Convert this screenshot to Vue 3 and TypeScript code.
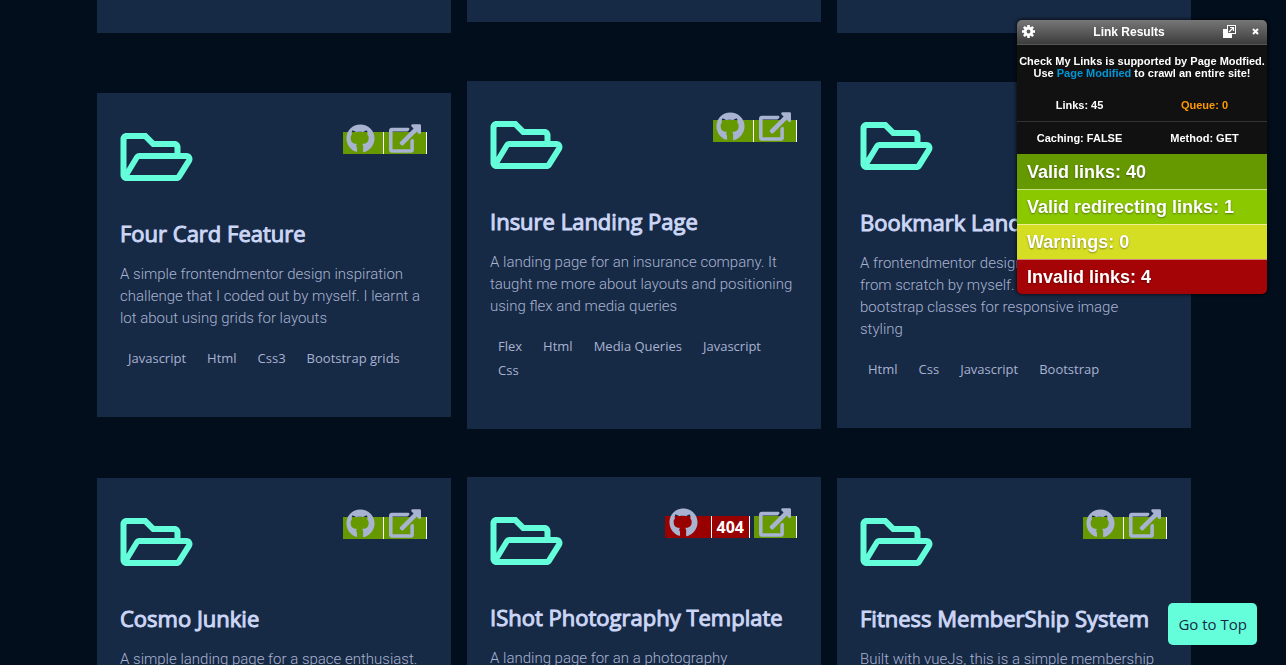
<script setup lang="ts">
interface LinkBadge {
  kind: 'github' | 'external'
  status: 'valid' | 'invalid'
  code?: string
}

interface Project {
  title: string
  text: string
  tags: string[]
  links: LinkBadge[]
  size?: string
}

const github: LinkBadge = { kind: 'github', status: 'valid' }
const external: LinkBadge = { kind: 'external', status: 'valid' }

const projects: Project[] = [
  {
    title: 'Four Card Feature',
    text: 'A simple frontendmentor design inspiration challenge that I coded out by myself. I learnt a lot about using grids for layouts',
    tags: ['Javascript', 'Html', 'Css3', 'Bootstrap grids'],
    links: [github, external],
  },
  {
    title: 'Insure Landing Page',
    text: 'A landing page for an insurance company. It taught me more about layouts and positioning using flex and media queries',
    tags: ['Flex', 'Html', 'Media Queries', 'Javascript', 'Css'],
    links: [github, external],
  },
  {
    title: 'Bookmark Landing',
    text: 'A frontendmentor design\nfrom scratch by myself.\nbootstrap classes for responsive image\nstyling',
    tags: ['Html', 'Css', 'Javascript', 'Bootstrap'],
    links: [github, external],
  },
  {
    title: 'Cosmo Junkie',
    text: 'A simple landing page for a space enthusiast.',
    tags: [],
    links: [github, external],
    size: 'medium',
  },
  {
    title: 'IShot Photography Template',
    text: 'A landing page for an a photography',
    tags: [],
    links: [{ kind: 'github', status: 'invalid', code: '404' }, external],
    size: 'tall',
  },
  {
    title: 'Fitness MemberShip System',
    text: 'Built with vueJs, this is a simple membership',
    tags: [],
    links: [github, external],
    size: 'medium',
  },
]

const results = [
  { name: 'valid', label: 'Valid links: 40' },
  { name: 'redirect', label: 'Valid redirecting links: 1' },
  { name: 'warning', label: 'Warnings: 0' },
  { name: 'invalid', label: 'Invalid links: 4' },
]

const teeth = [0, 45, 90, 135, 180, 225, 270, 315]

function toTop(): void {
  window.scrollTo({ top: 0, behavior: 'smooth' })
}
</script>

<template>
  <div class="page">
    <main class="projects">
      <div class="tail"></div>
      <div class="tail tail-short"></div>
      <div class="tail"></div>
      <article v-for="p in projects" :key="p.title" class="card" :class="p.size">
        <header class="card-head">
          <svg class="folder" viewBox="0 0 576 512" aria-hidden="true">
            <path d="M527.9 224H480v-48c0-26.5-21.5-48-48-48H272l-64-64H48C21.5 64 0 85.5 0 112v288c0 26.5 21.5 48 48 48h400c16.5 0 31.9-8.5 40.7-22.6l79.9-128c20-31.9-3-73.4-40.7-73.4zM48 118c0-3.3 2.7-6 6-6h134.1l64 64H426c3.3 0 6 2.7 6 6v42H152c-16.8 0-32.4 8.8-41.1 23.2L48 351.4zm400 282H72l77.2-128H528z" />
          </svg>
          <div class="links">
            <a
              v-for="l in p.links"
              :key="l.kind"
              href="#"
              class="badge"
              :class="[l.kind, l.status]"
              :aria-label="l.kind === 'github' ? 'Source code' : 'Live site'"
            >
              <span class="badge-icon">
                <svg v-if="l.kind === 'github'" viewBox="0 0 496 512" aria-hidden="true">
                  <path d="M244.8 8C106.1 8 0 113.3 0 252c0 110.9 69.8 205.8 169.5 239.2 12.8 2.3 17.3-5.6 17.3-12.1 0-6.2-.3-40.4-.3-61.4 0 0-10-15-14.700-29.800 0-12 6-26 14.800-33.200-55.900-6.200-112.300-14.300-112.300-110.500 0-27.500 7.600-41.300 23.600-58.900-2.600-6.500-11.100-33.300 2.600-67.900 20.900-6.500 69 27 69 27 20-5.600 41.500-8.500 62.800-8.500s42.800 2.900 62.800 8.500c0 0 48.100-33.600 69-27 13.700 34.700 5.200 61.400 2.600 67.900 16 17.700 25.800 31.500 25.800 58.900 0 96.500-58.900 104.200-114.800 110.500 9.200 7.900 17 22.900 17 46.400 0 33.700-.3 75.400-.3 83.600 0 6.500 4.600 14.400 17.300 12.100C428.200 457.800 496 362.900 496 252 496 113.300 383.500 8 244.800 8z" />
                </svg>
                <svg v-else viewBox="0 0 576 512" aria-hidden="true">
                  <path d="M576 24v127.984c0 21.461-25.96 31.98-40.971 16.971l-35.707-35.709-243.523 243.523c-9.373 9.373-24.568 9.373-33.941 0l-22.627-22.627c-9.373-9.373-9.373-24.569 0-33.941L442.756 76.676l-35.703-35.705C391.982 25.9 402.656 0 424.024 0H552c13.255 0 24 10.745 24 24zM407.029 270.794l-16 16A23.999 23.999 0 0 0 384 303.765V448H64V128h264a24.003 24.003 0 0 0 16.97-7.029l16-16C376.089 89.851 365.381 64 344 64H48C21.49 64 0 85.49 0 112v352c0 26.51 21.49 48 48 48h352c26.51 0 48-21.49 48-48V287.764c0-21.382-25.852-32.09-40.971-16.97z" />
                </svg>
              </span>
              <span v-if="l.code" class="code">{{ l.code }}</span>
            </a>
          </div>
        </header>
        <h2>{{ p.title }}</h2>
        <p class="text">{{ p.text }}</p>
        <ul v-if="p.tags.length" class="tags">
          <li v-for="t in p.tags" :key="t">{{ t }}</li>
        </ul>
      </article>
    </main>

    <aside class="panel">
      <header class="panel-head">
        <button type="button" class="tool" aria-label="Settings">
          <svg width="13" height="13" viewBox="0 0 14 14" aria-hidden="true">
            <circle cx="7" cy="7" r="3.6" fill="none" stroke="#fff" stroke-width="3" />
            <rect v-for="a in teeth" :key="a" x="5.6" y="0" width="2.8" height="3.2" fill="#fff" :transform="`rotate(${a} 7 7)`" />
          </svg>
        </button>
        <h1>Link Results</h1>
        <button type="button" class="tool" aria-label="Open in window">
          <svg width="13" height="13" viewBox="0 0 13 13" aria-hidden="true">
            <path d="M0 4h4v5h5v4H0z" fill="#fff" />
            <path d="M4 0h9v9H4z" fill="#fff" />
            <path d="M5 1h7v7H5z" fill="#555" />
            <path d="M7 2.500h3.500V6M10.500 2.500L6 7" fill="none" stroke="#fff" stroke-width="1.2" />
          </svg>
        </button>
        <button type="button" class="tool" aria-label="Close">
          <svg width="7" height="7" viewBox="0 0 7 7" aria-hidden="true">
            <path d="M1 1l5 5M6 1L1 6" stroke="#fff" stroke-width="2" />
          </svg>
        </button>
      </header>
      <p class="support">
        Check My Links is supported by Page Modfied.<br />
        Use <a href="#">Page Modified</a> to crawl an entire site!
      </p>
      <div class="stats">
        <span>Links: 45</span><span class="queue">Queue: 0</span>
      </div>
      <div class="stats options">
        <span>Caching: FALSE</span><span>Method: GET</span>
      </div>
      <ul class="results">
        <li v-for="r in results" :key="r.name" :class="r.name">{{ r.label }}</li>
      </ul>
    </aside>

    <button type="button" class="top" @click="toTop">Go to Top</button>
  </div>
</template>

<style>
body {
  margin: 0;
  background: #020e1c;
}
</style>

<style scoped>
.page {
  height: 100vh;
  overflow: hidden;
  background: #020e1c;
  font-family: "Open Sans", sans-serif;
}
.projects {
  display: grid;
  grid-template-columns: repeat(3, 1fr);
  gap: 48px 16px;
  align-items: center;
  padding: 0 95px 0 97px;
}
.tail,
.card {
  box-sizing: border-box;
  background: #172a45;
}
.tail {
  height: 33px;
}
.tail-short {
  height: 22px;
  align-self: start;
}
.card {
  min-width: 0;
  padding: 32px 24px 47px 23px;
}
.medium {
  min-height: 346px;
}
.tall {
  min-height: 348px;
}
.card-head {
  display: flex;
  justify-content: space-between;
  align-items: flex-start;
  height: 64px;
}
.folder {
  width: 73px;
  height: 64px;
  fill: #64ffda;
}
.links {
  display: flex;
  padding-top: 7px;
}
.badge {
  display: flex;
  height: 22px;
  color: #fff;
  text-decoration: none;
}
.badge-icon {
  display: flex;
  align-items: flex-end;
  border-right: 1px solid #fff;
}
.badge-icon svg {
  height: 29px;
  margin-bottom: 1px;
  fill: #a8b2d1;
}
.github .badge-icon {
  padding: 0 8px 0 3px;
}
.github svg {
  width: 29px;
}
.external .badge-icon {
  padding: 0 5px;
}
.external svg {
  width: 32px;
}
.valid {
  background: #690;
}
.badge.invalid {
  margin-right: 4px;
  background: #900;
}
.badge.invalid .badge-icon {
  padding: 0 13px 0 4px;
}
.code {
  padding: 0 5px;
  border-right: 1px solid #fff;
  font-size: 16px;
  font-weight: 700;
  line-height: 22px;
}
h2 {
  margin: 30px 0 16px;
  color: #ccd6f6;
  font-size: 22px;
  font-weight: 400;
  line-height: 28px;
  white-space: nowrap;
  -webkit-text-stroke: 1px #ccd6f6;
}
.text {
  margin: 0;
  color: #a8b2d1;
  font-family: Roboto, sans-serif;
  font-size: 15px;
  font-weight: 300;
  line-height: 22px;
  white-space: pre-line;
}
.tags {
  display: flex;
  flex-wrap: wrap;
  column-gap: 21px;
  margin: 17px 0 0;
  padding: 0 8px;
  list-style: none;
  color: #a8b2d1;
  font-size: 13px;
  line-height: 24px;
}
.panel {
  position: fixed;
  top: 20px;
  right: 19px;
  width: 250px;
  overflow: hidden;
  border-radius: 5px;
  background: #111;
  box-shadow: 0 0 4px #000;
  color: #fff;
  font-family: "Liberation Sans", Arial, sans-serif;
  font-size: 11px;
  font-weight: 700;
  line-height: 12px;
}
.panel-head {
  display: flex;
  align-items: center;
  gap: 16px;
  height: 23px;
  padding: 0 8px 1px 5px;
  border-bottom: 1px solid #555;
  background: linear-gradient(#777, #3c3c3c);
}
h1 {
  flex: 1;
  margin: 0;
  font-size: 12px;
  line-height: 14px;
  text-align: center;
}
.tool {
  display: flex;
  padding: 0;
  border: 0;
  background: none;
}
.support {
  margin: 0;
  padding: 10px 0 20px;
  text-align: center;
  white-space: nowrap;
}
.support a {
  color: #0096d6;
  text-decoration: none;
}
.stats {
  display: grid;
  grid-template-columns: 1fr 1fr;
  padding: 0 0 10px;
  text-align: center;
}
.queue {
  color: #f90;
}
.options {
  padding: 10px 0;
  border-top: 1px solid #333;
}
.results {
  margin: 0;
  padding: 0;
  list-style: none;
  font-size: 18px;
  line-height: 34px;
  text-shadow: 0 1px 2px rgba(0, 0, 0, 0.4);
}
.results li {
  padding: 0 10px;
  border-top: 1px solid rgba(255, 255, 255, 0.5);
}
.results .valid {
  border-top-color: #690;
}
.results .redirect {
  background: #8bc800;
}
.results .warning {
  background: #d6de23;
}
.results .invalid {
  background: #a50407;
}
.top {
  position: fixed;
  right: 29px;
  bottom: 20px;
  padding: 10px;
  border: 0;
  border-radius: 5px;
  background: #64ffda;
  color: #172a45;
  font-family: "Open Sans", sans-serif;
  font-size: 15px;
  line-height: 22px;
}
</style>
